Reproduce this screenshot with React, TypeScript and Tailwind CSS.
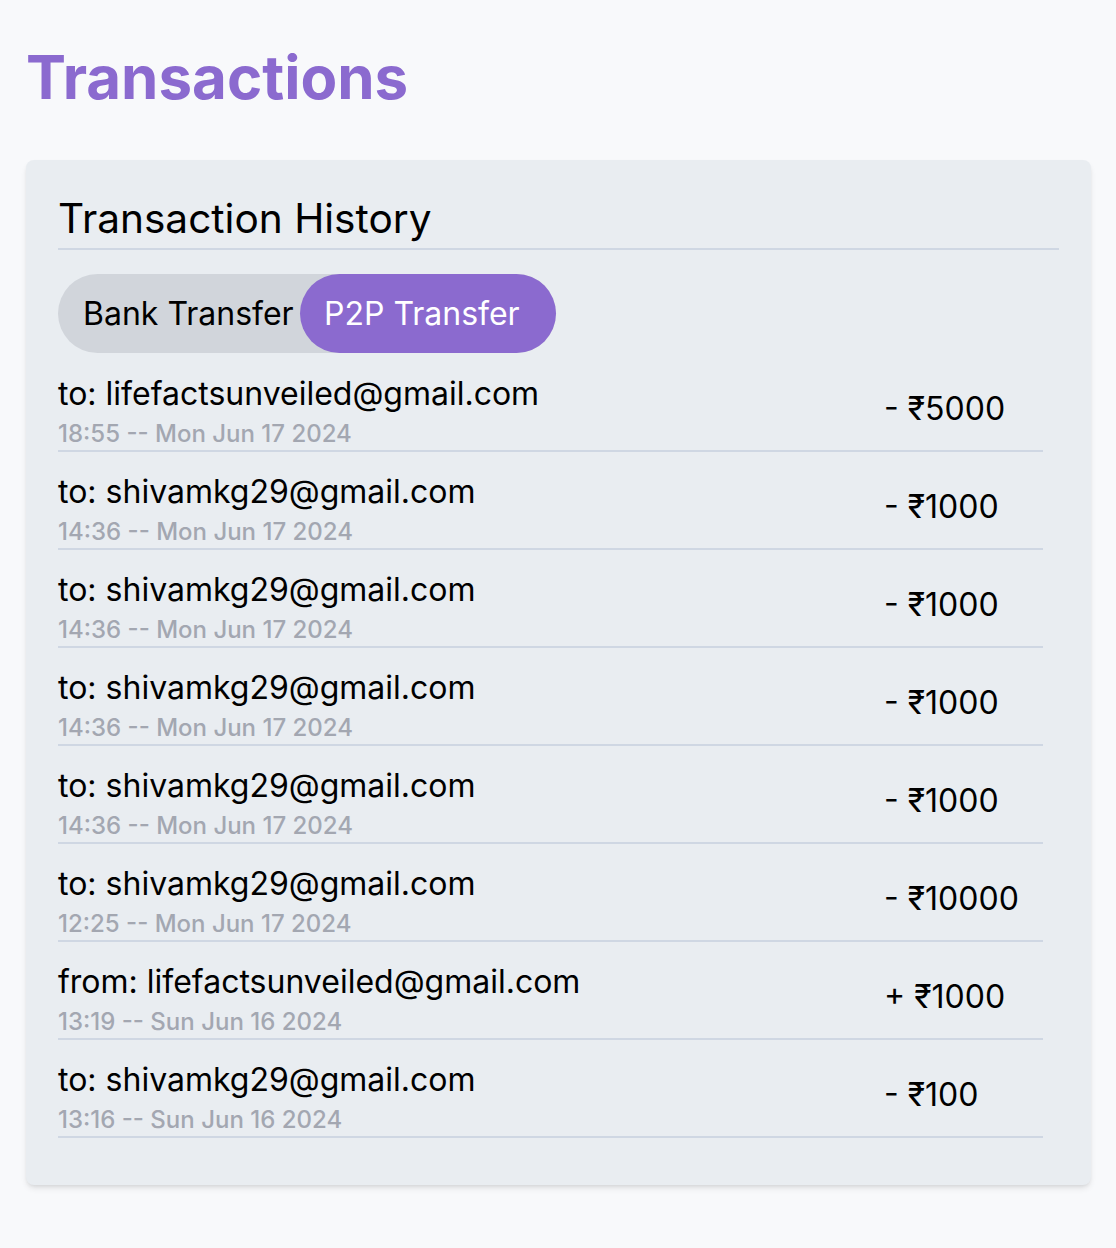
import React, { useState } from "react";

interface Txn {
    dir: "to" | "from";
    email: string;
    time: string;
    amount: number;
}

const txns: Txn[] = [
    { dir: "to", email: "lifefactsunveiled@gmail.com", time: "18:55 -- Mon Jun 17 2024", amount: 5000 },
    { dir: "to", email: "shivamkg29@gmail.com", time: "14:36 -- Mon Jun 17 2024", amount: 1000 },
    { dir: "to", email: "shivamkg29@gmail.com", time: "14:36 -- Mon Jun 17 2024", amount: 1000 },
    { dir: "to", email: "shivamkg29@gmail.com", time: "14:36 -- Mon Jun 17 2024", amount: 1000 },
    { dir: "to", email: "shivamkg29@gmail.com", time: "14:36 -- Mon Jun 17 2024", amount: 1000 },
    { dir: "to", email: "shivamkg29@gmail.com", time: "12:25 -- Mon Jun 17 2024", amount: 10000 },
    { dir: "from", email: "lifefactsunveiled@gmail.com", time: "13:19 -- Sun Jun 16 2024", amount: 1000 },
    { dir: "to", email: "shivamkg29@gmail.com", time: "13:16 -- Sun Jun 16 2024", amount: 100 },
];

export default function App() {
    const [tab, setTab] = useState<"bank" | "p2p">("p2p");

    return (
        <div className="min-h-screen bg-[#f8f9fb] font-['Inter',sans-serif] pb-[60px]">
            <h1 className="px-[26px] pt-[47px] text-[60px] leading-none font-bold text-[#8b6acf]">
                Transactions
            </h1>

            <div className="ml-[26px] mr-[25px] mt-[53px] rounded-lg bg-[#e9edf1] px-[32px] pt-[35px] pb-[47px] shadow-md">
                <h2 className="text-[40.6px] leading-[48px] text-black border-b-2 border-[#cfd7e3] pb-[5px]">
                    Transaction History
                </h2>

                <div className="mt-[24px] inline-flex h-[79px] rounded-full bg-[#d1d5db]">
                    <button
                        onClick={() => setTab("bank")}
                        className={`h-full w-[242px] rounded-full pl-[25px] text-left text-[32px] ${tab === "bank" ? "bg-[#8b6acf] text-white" : "text-black"}`}
                    >
                        Bank Transfer
                    </button>
                    <button
                        onClick={() => setTab("p2p")}
                        className={`h-full w-[256px] rounded-full pl-[24px] text-left text-[32px] ${tab === "p2p" ? "bg-[#8b6acf] text-white" : "text-black"}`}
                    >
                        P2P Transfer
                    </button>
                </div>

                <div className="mr-[16px] mt-[1px]">
                    {txns.map((t, i) => (
                        <div key={i} className="flex border-b-2 border-[#cfd7e3] pt-[21px] pb-[1px]">
                            <div className="flex-1">
                                <div className="text-[32px] leading-[38px] text-black">
                                    {t.dir}: {t.email}
                                </div>
                                <div className="mt-[6px] text-[24px] leading-[30px] font-medium text-[#a3a7b1]">{t.time}</div>
                            </div>
                            <div className="w-[159px] pt-[15px] text-[32px] leading-[38px] text-black">
                                {t.dir === "to" ? "-" : "+"} ₹{t.amount}
                            </div>
                        </div>
                    ))}
                </div>
            </div>
        </div>
    );
}
